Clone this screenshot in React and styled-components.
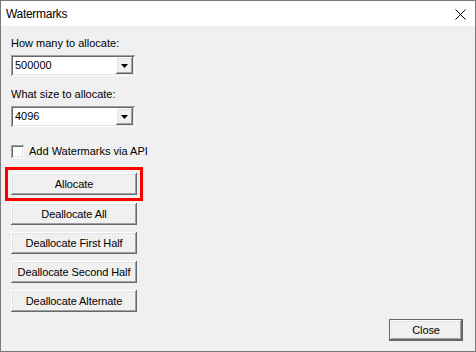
import React from "react";
import styled, { createGlobalStyle } from "styled-components";

const GlobalStyle = createGlobalStyle`
  html, body {
    margin: 0;
    padding: 0;
    background: #f0f0f0;
  }
  * {
    box-sizing: border-box;
  }
`;

const raised = `
  box-shadow: inset -1px -1px #696969, inset 1px 1px #ffffff,
    inset -2px -2px #a0a0a0, inset 2px 2px #e3e3e3;
`;

const sunken = `
  box-shadow: inset 1px 1px #a0a0a0, inset -1px -1px #ffffff,
    inset 2px 2px #696969, inset -2px -2px #e3e3e3;
`;

const Window = styled.div`
  width: 476px;
  height: 352px;
  border: 1px solid #7a7a7a;
  background: #f0f0f0;
  display: flex;
  flex-direction: column;
  font-family: "Liberation Sans", Arial, sans-serif;
  font-size: 11px;
  color: #000;
`;

const TitleBar = styled.div`
  height: 25px;
  background: #ffffff;
  display: flex;
  align-items: center;
  justify-content: space-between;
  padding: 0 9px 0 5px;
`;

const Title = styled.span`
  font-size: 12px;
  letter-spacing: -0.3px;
  line-height: 14px;
  padding-top: 1px;
`;

const CloseX = styled.svg`
  width: 11px;
  height: 11px;
  margin-top: 1px;
`;

const Body = styled.div`
  flex: 1;
  display: flex;
  flex-direction: column;
  align-items: flex-start;
  padding: 11px 12px 10px 10px;
`;

const Label = styled.div`
  line-height: 13px;
  margin-top: ${(p) => p.$top || 0}px;
  white-space: nowrap;
`;

const Combo = styled.div`
  width: 124px;
  height: 21px;
  margin-top: 5px;
  background: #ffffff;
  display: flex;
  align-items: stretch;
  padding: 2px;
  ${sunken}
`;

const ComboText = styled.div`
  flex: 1;
  display: flex;
  align-items: center;
  padding-left: 2px;
  line-height: 13px;
`;

const ArrowButton = styled.div`
  width: 17px;
  background: #f0f0f0;
  display: flex;
  align-items: center;
  justify-content: center;
  ${raised}
`;

const CheckRow = styled.label`
  display: flex;
  align-items: center;
  gap: 5px;
  margin-top: 18px;
  line-height: 13px;
`;

const CheckBox = styled.span`
  width: 13px;
  height: 13px;
  background: #ffffff;
  ${sunken}
`;

const Button = styled.button`
  width: ${(p) => p.$width || 126}px;
  height: 22px;
  margin-top: ${(p) => p.$top || 0}px;
  padding: 0;
  background: #f0f0f0;
  border: none;
  font-family: "Liberation Sans", Arial, sans-serif;
  font-size: 11px;
  letter-spacing: -0.1px;
  color: #000;
  line-height: 13px;
  ${raised}
  outline: ${(p) => (p.$marked ? "3px solid #ff0000" : "none")};
  outline-offset: 3px;
`;

const DefaultButton = styled(Button)`
  border: 1px solid #646464;
  align-self: flex-end;
  margin-top: auto;
`;

const Arrow = () => (
  <svg width="7" height="4" viewBox="0 0 7 4">
    <polygon points="0,0 7,0 3.5,4" fill="#000" />
  </svg>
);

const ComboBox = ({ value }) => (
  <Combo>
    <ComboText>{value}</ComboText>
    <ArrowButton>
      <Arrow />
    </ArrowButton>
  </Combo>
);

export default function App() {
  return (
    <>
      <GlobalStyle />
      <Window>
        <TitleBar>
          <Title>Watermarks</Title>
          <CloseX viewBox="0 0 11 11">
            <path d="M0.5 0.5 L10.5 10.5 M10.5 0.5 L0.5 10.5" stroke="#000" strokeWidth="1" fill="none" />
          </CloseX>
        </TitleBar>
        <Body>
          <Label>How many to allocate:</Label>
          <ComboBox value="500000" />
          <Label $top={12}>What size to allocate:</Label>
          <ComboBox value="4096" />
          <CheckRow>
            <CheckBox />
            Add Watermarks via API
          </CheckRow>
          <Button $top={15} $marked>Allocate</Button>
          <Button $top={8}>Deallocate All</Button>
          <Button $top={7}>Deallocate First Half</Button>
          <Button $top={7}>Deallocate Second Half</Button>
          <Button $top={7}>Deallocate Alternate</Button>
          <DefaultButton $width={74}>Close</DefaultButton>
        </Body>
      </Window>
    </>
  );
}
